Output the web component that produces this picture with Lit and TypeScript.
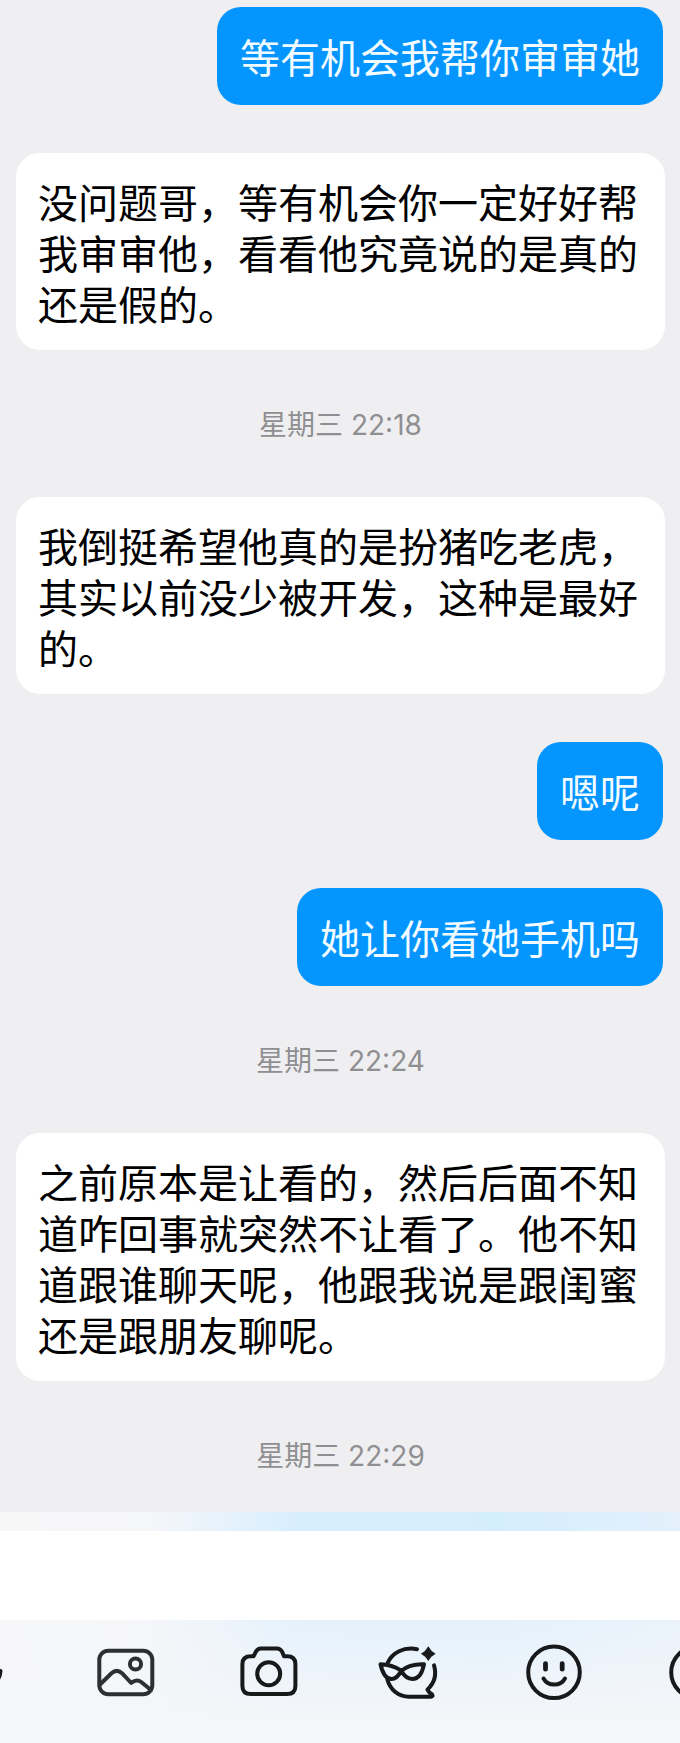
import { LitElement, html, css, svg } from "lit";
import { customElement, property } from "lit/decorators.js";

type Entry =
  | { kind: "in" | "out"; text: string }
  | { kind: "time"; text: string };

const entries: Entry[] = [
  { kind: "out", text: "等有机会我帮你审审她" },
  { kind: "in", text: "没问题哥，等有机会你一定好好帮我审审他，看看他究竟说的是真的还是假的。" },
  { kind: "time", text: "星期三 22:18" },
  { kind: "in", text: "我倒挺希望他真的是扮猪吃老虎，其实以前没少被开发，这种是最好的。" },
  { kind: "out", text: "嗯呢" },
  { kind: "out", text: "她让你看她手机吗" },
  { kind: "time", text: "星期三 22:24" },
  { kind: "in", text: "之前原本是让看的，然后后面不知道咋回事就突然不让看了。他不知道跟谁聊天呢，他跟我说是跟闺蜜还是跟朋友聊呢。" },
  { kind: "time", text: "星期三 22:29" },
];

const tools = [
  {
    label: "语音",
    icon: svg`<rect x="22" y="4" width="16" height="32" rx="8"/>
      <path d="M11 29C12 51 46 51 47.500 29M30 47V56"/>`,
  },
  {
    label: "图片",
    icon: svg`<g stroke="#2e2f31"><rect x="3.3" y="8.7" width="53" height="43.6" rx="9"/>
      <circle cx="39.5" cy="22" r="5.6"/>
      <path d="M4 42.5L15.5 31.2Q20.8 26.6 26 31.2L35.2 41L37 39.7Q41.5 37 45.5 40.3L55 48"/></g>`,
  },
  {
    label: "拍照",
    icon: svg`<path d="M12 14.3H14.5L17 9.5Q18.8 6.5 22 6.5H38Q41 6.5 43 9.5L45 14.3H48Q56.4 14.3 56.4 22V44Q56.4 52 48 52H12Q3.4 52 3.4 44V22Q3.4 14.3 12 14.3Z"/>
      <circle cx="29.7" cy="31.7" r="11.5"/>`,
  },
  {
    label: "面具",
    icon: svg`<path d="M6.6 21C11 10.500 23 4.600 36 7.200"/>
      <path d="M53 23.300C55.800 33 53.600 41 46.400 47.600Q47.600 50.600 51 52.300Q52.600 54.600 50 54.700H28C17 54.700 9 47.500 6.300 37.300"/>
      <path d="M20.300 28.700C14 24.500 7.500 22.500 -0.500 22.300C1 29 3.500 37 10.500 37C15.500 37 18 33 20.300 28.700C26 24 34 21.800 43 22.200C41.500 30 38 37 31.500 37C25.500 37 22.500 33 20.300 28.700Z"/>
      <path class="solid" d="M47.300 4.300Q49.800 9.200 54.600 11.700Q49.800 14.200 47.300 19.100Q44.800 14.200 40 11.700Q44.800 9.200 47.300 4.300Z"/>`,
  },
  {
    label: "表情",
    icon: svg`<circle cx="30" cy="30.3" r="25.8"/>
      <path stroke-width="4.800" d="M21.500 21.600V27.200M38.200 21.600V27.200"/>
      <path d="M19.500 36.500C24 44.600 36.500 44.600 41 36.500"/>`,
  },
  {
    label: "更多",
    icon: svg`<circle cx="30" cy="30.3" r="25.8"/><path d="M18 30.300H42M30 18.300V42.300"/>`,
  },
];

@customElement("chat-bubble")
class ChatBubble extends LitElement {
  @property({ reflect: true }) side: "in" | "out" = "in";

  static styles = css`
    :host {
      display: block;
      box-sizing: border-box;
      border-radius: 24px;
      font-size: 40px;
      line-height: 51px;
    }
    :host([side="in"]) {
      align-self: stretch;
      padding: 23px 22px 21px;
      background: #fff;
      color: #000;
    }
    :host([side="out"]) {
      align-self: flex-end;
      margin-right: 2px;
      padding: 24px 23px 23px;
      background: #0495ff;
      color: #f2fbff;
    }
  `;

  render() {
    return html`<slot></slot>`;
  }
}

@customElement("chat-composer")
class ChatComposer extends LitElement {
  static styles = css`
    :host {
      display: block;
      overflow: hidden;
      padding-top: 19px;
      background:
        linear-gradient(to bottom, transparent 10%, #f5f6f9 92%),
        linear-gradient(to right, #f7f7f8 0%, #f5f6f9 22%, #d7eefe 44%, #d5eefe 74%, #e3f0fb 100%);
    }
    .field {
      display: block;
      box-sizing: border-box;
      width: 100%;
      height: 89px;
      padding: 19px 22px;
      border: 0;
      outline: 0;
      resize: none;
      background: #fff;
      font: inherit;
      font-size: 40px;
      line-height: 51px;
    }
    .tools {
      display: flex;
      justify-content: center;
      padding: 22px 0 41px;
    }
    .tool {
      flex: 0 0 21%;
      display: flex;
      justify-content: center;
      padding: 0;
      border: 0;
      background: none;
      color: #17191b;
    }
    .icon {
      width: 60px;
      height: 60px;
      overflow: visible;
      fill: none;
      stroke: currentColor;
      stroke-width: 4;
      stroke-linecap: round;
      stroke-linejoin: round;
    }
    .solid {
      fill: currentColor;
      stroke: none;
    }
  `;

  render() {
    return html`
      <textarea class="field" rows="1" aria-label="消息"></textarea>
      <div class="tools">
        ${tools.map(
          (t) => html`<button class="tool" type="button" aria-label=${t.label}>
            <svg class="icon" viewBox="0 0 60 60" aria-hidden="true">${t.icon}</svg>
          </button>`
        )}
      </div>
    `;
  }
}

@customElement("app-root")
class AppRoot extends LitElement {
  static styles = css`
    :host {
      display: flex;
      flex-direction: column;
      min-height: 100vh;
      overflow: hidden;
      background: #efeff1;
      font-family: "Noto Sans CJK SC", sans-serif;
    }
    .log {
      flex: 1;
      display: flex;
      flex-direction: column;
      gap: 48px;
      padding: 7px 15px 32px 16px;
    }
    .time {
      align-self: center;
      padding-top: 3px;
      color: #8f8f92;
      font-family: Inter, "Noto Sans CJK SC", sans-serif;
      font-size: 28px;
      line-height: 48px;
    }
  `;

  render() {
    return html`
      <main class="log">
        ${entries.map((e) =>
          e.kind === "time"
            ? html`<time class="time">${e.text}</time>`
            : html`<chat-bubble side=${e.kind}>${e.text}</chat-bubble>`
        )}
      </main>
      <chat-composer></chat-composer>
    `;
  }
}
